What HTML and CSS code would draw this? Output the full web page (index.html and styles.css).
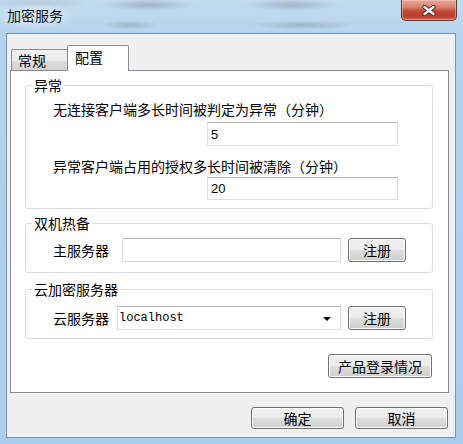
FILE: index.html
```html
<!DOCTYPE html>
<html lang="zh-CN">
<head>
<meta charset="utf-8">
<title>加密服务</title>
<link rel="stylesheet" href="styles.css">
</head>
<body>
<div class="window">
  <div class="titlebar">
    <span class="title">加密服务</span>
    <div class="close">
      <svg width="14" height="11" viewBox="0 0 14 11">
        <path d="M2.5 2 L11.5 9 M11.5 2 L2.5 9" stroke="#4a2a24" stroke-width="4.2" stroke-linecap="round"/>
        <path d="M2.5 2 L11.5 9 M11.5 2 L2.5 9" stroke="#ffffff" stroke-width="2.4" stroke-linecap="round"/>
      </svg>
    </div>
  </div>
  <div class="client">
    <div class="tabs">
      <div class="tab">常规</div>
      <div class="tab active">配置</div>
    </div>
    <div class="panel">
      <fieldset class="group g1">
        <legend>异常</legend>
        <div class="q q1">无连接客户端多长时间被判定为异常（分钟）</div>
        <div class="textbox num n1">5</div>
        <div class="q q2">异常客户端占用的授权多长时间被清除（分钟）</div>
        <div class="textbox num n2">20</div>
      </fieldset>
      <fieldset class="group g2">
        <legend>双机热备</legend>
        <div class="row">
          <span class="lbl lbl-main">主服务器</span>
          <div class="textbox server"></div>
          <button class="btn reg">注册</button>
        </div>
      </fieldset>
      <fieldset class="group g3">
        <legend>云加密服务器</legend>
        <div class="row">
          <span class="lbl lbl-cloud">云服务器</span>
          <div class="textbox combo"><span class="combo-text">localhost</span><span class="arrow"></span></div>
          <button class="btn reg">注册</button>
        </div>
      </fieldset>
      <div class="panel-actions">
        <button class="btn login">产品登录情况</button>
      </div>
    </div>
    <div class="actions">
      <button class="btn dlg">确定</button>
      <button class="btn dlg">取消</button>
    </div>
  </div>
</div>
</body>
</html>
```

FILE: styles.css
```css
* { box-sizing: border-box; }

html, body {
  margin: 0;
  padding: 0;
}

body {
  width: 463px;
  height: 444px;
  overflow: hidden;
  font-family: "Noto Sans CJK SC", "Noto Sans", sans-serif;
  font-size: 14px;
  color: #000;
}

.window {
  width: 463px;
  height: 444px;
  background:
    radial-gradient(ellipse 40px 14px at 36px 16px, rgba(255,255,255,0.55), rgba(255,255,255,0)),
    radial-gradient(ellipse 48px 6px at 148px 5px, rgba(110,120,130,0.4), rgba(110,120,130,0)),
    radial-gradient(ellipse 30px 5px at 130px 25px, rgba(110,120,130,0.35), rgba(110,120,130,0)),
    radial-gradient(ellipse 48px 6px at 292px 5px, rgba(110,120,130,0.38), rgba(110,120,130,0)),
    radial-gradient(ellipse 55px 5px at 302px 25px, rgba(110,120,130,0.35), rgba(110,120,130,0)),
    radial-gradient(ellipse 50px 5px at 40px 3px, rgba(120,130,140,0.2), rgba(120,130,140,0)),
    linear-gradient(180deg, #c3dcef 0%, #b4d3ee 40px, #a9cdee 100%);
  display: flex;
  flex-direction: column;
}

/* title bar */
.titlebar {
  height: 33px;
  display: flex;
  align-items: flex-start;
  justify-content: space-between;
  padding: 0 6px 0 7px;
}

.title {
  margin-top: 6px;
  line-height: 18px;
  font-size: 14px;
  color: #111;
}

.close {
  width: 56px;
  height: 21px;
  border: 1px solid #5e3a33;
  border-top: none;
  border-radius: 0 0 5px 5px;
  background: linear-gradient(180deg, #e8aa9a 0%, #d7826d 35%, #c24a37 55%, #bb3c2a 80%, #d0644a 100%);
  box-shadow: inset 0 0 0 1px rgba(255,210,200,0.45);
  display: flex;
  align-items: center;
  justify-content: center;
}

/* client area */
.client {
  margin-left: 6px;
  width: 450px;
  height: 405px;
  border: 1px solid #7f93a8;
  background: #f0f0f0;
  display: flex;
  flex-direction: column;
}

.tabs {
  margin: 11px 0 -1px 4px;
  height: 26px;
  display: flex;
  align-items: flex-end;
}

.tab {
  height: 22px;
  width: 56px;
  border: 1px solid #898c95;
  border-right: none;
  border-bottom: none;
  border-radius: 2px 0 0 0;
  background: linear-gradient(180deg, #f3f3f3 0%, #ebebeb 50%, #dedede 51%, #d2d2d2 100%);
  padding-left: 6px;
  line-height: 20px;
  font-size: 14px;
}

.tab.active {
  position: relative;
  z-index: 1;
  height: 26px;
  width: 62px;
  border-right: 1px solid #898c95;
  border-radius: 2px 2px 0 0;
  background: #ffffff;
  padding-left: 7px;
  line-height: 22px;
}

.panel {
  margin-left: 3px;
  width: 439px;
  height: 323px;
  border: 1px solid #898c95;
  background: #ffffff;
  display: flex;
  flex-direction: column;
}

/* group boxes */
.group {
  margin: 0 0 0 14px;
  width: 408px;
  border: 1px solid #d5dfe5;
  border-radius: 3px;
  padding: 0 0 0 27px;
  min-width: 0;
}

.group legend {
  margin-left: -21px;
  padding: 0 2px;
  line-height: 18px;
  font-size: 14px;
}

.g1 { margin-top: 5px; padding-top: 6px; padding-bottom: 8px; }
.g2 { margin-top: 5px; padding-top: 6px; padding-bottom: 10px; }
.g3 { margin-top: 7px; padding-top: 8px; padding-bottom: 8px; }

.q {
  line-height: 18px;
  white-space: nowrap;
}

.q2 { margin-top: 11px; }

.textbox {
  background: #fff;
  border: 1px solid #dadde2;
  border-top-color: #b3b6bd;
}

.num {
  margin-left: 154px;
  width: 191px;
  font-family: "Liberation Sans", Arial, sans-serif;
  font-size: 13px;
  padding-left: 3px;
  display: flex;
  align-items: center;
}

.n1 { margin-top: 4px; height: 24px; }
.n2 { margin-top: 2px; height: 23px; }

.row {
  display: flex;
  align-items: center;
  height: 24px;
}

.lbl {
  line-height: 18px;
  white-space: nowrap;
}

.lbl-main { width: 69px; }
.lbl-cloud { width: 64px; }

.server {
  width: 219px;
  height: 24px;
}

.combo {
  width: 224px;
  height: 24px;
  display: flex;
  align-items: center;
  justify-content: space-between;
  padding: 0 9px 0 1px;
}

.combo-text {
  font-family: "Liberation Mono", "Courier New", monospace;
  font-size: 12px;
}

.arrow {
  width: 0;
  height: 0;
  border-left: 4px solid transparent;
  border-right: 4px solid transparent;
  border-top: 4px solid #000;
  margin-top: 2px;
}

/* buttons */
.btn {
  font-family: "Noto Sans CJK SC", "Noto Sans", sans-serif;
  font-size: 14px;
  color: #000;
  border: 1px solid #707070;
  border-radius: 3px;
  background: linear-gradient(180deg, #f2f2f2 0%, #ebebeb 48%, #dddddd 52%, #cfcfcf 100%);
  box-shadow: inset 0 0 0 1px #fbfbfb;
  padding: 0;
  line-height: 18px;
  display: flex;
  align-items: center;
  justify-content: center;
}

.reg {
  margin-left: 7px;
  width: 58px;
  height: 24px;
}

.panel-actions {
  margin-top: 15px;
  padding-right: 16px;
  display: flex;
  justify-content: flex-end;
}

.login {
  width: 104px;
  height: 24px;
}

.actions {
  margin-top: 14px;
  padding-right: 7px;
  display: flex;
  justify-content: flex-end;
  gap: 11px;
}

.dlg {
  width: 93px;
  height: 22px;
}
```
